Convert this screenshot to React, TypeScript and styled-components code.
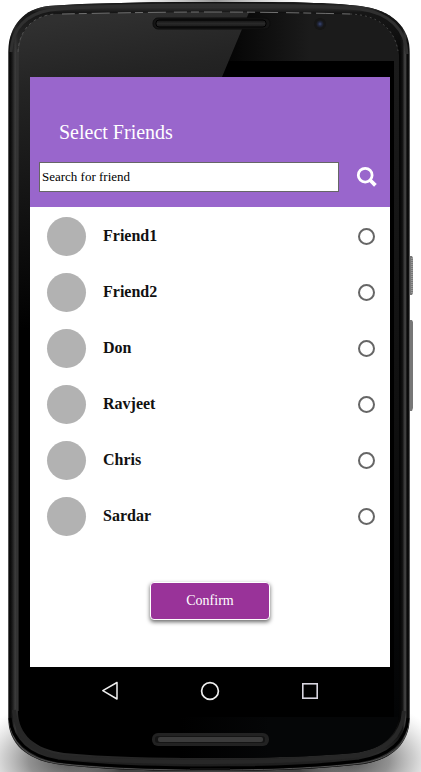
import React, { useState } from "react";
import styled, { createGlobalStyle } from "styled-components";

const GlobalStyle = createGlobalStyle`
  *, *::before, *::after { box-sizing: border-box; }
  body {
    margin: 0;
    background: #fff;
    font-family: "Liberation Serif", "Times New Roman", serif;
  }
`;

const Device = styled.div`
  position: relative;
  min-height: 772px;
  padding: 77px 31px 0 30px;
  overflow: hidden;
`;

const Shell = styled.svg`
  position: absolute;
  inset: 0;
  width: 100%;
  height: 100%;
`;

const Screen = styled.main`
  position: relative;
  display: flex;
  flex-direction: column;
  min-height: 590px;
  background: #fff;
`;

const Header = styled.header`
  padding: 43px 12px 15px 9px;
  background: #9966cc;
`;

const Title = styled.h1`
  margin: 0 0 18px 20px;
  font-size: 20px;
  line-height: 24px;
  font-weight: 400;
  color: #fff;
`;

const SearchForm = styled.form`
  display: flex;
  align-items: center;
  gap: 17px;
`;

const SearchInput = styled.input`
  flex: 1;
  min-width: 0;
  height: 30px;
  padding: 0 2px;
  border: 1px solid #666;
  border-radius: 0;
  background: #fff;
  font: 13px "Liberation Serif", "Times New Roman", serif;
  color: #000;
  &::placeholder { color: #000; opacity: 1; }
`;

const SearchButton = styled.button`
  display: flex;
  padding: 0;
  border: 0;
  background: none;
  cursor: pointer;
`;

const FriendList = styled.ul`
  margin: 0;
  padding: 1px 15px 0 17px;
  list-style: none;
`;

const FriendRow = styled.label`
  display: flex;
  align-items: center;
  height: 56px;
  font-size: 16px;
  font-weight: 700;
  color: #111;
  cursor: pointer;
`;

const Avatar = styled.span`
  width: 39px;
  height: 39px;
  margin-right: 17px;
  border-radius: 50%;
  background: #b2b2b2;
`;

const FriendName = styled.span`
  flex: 1;
`;

const Choice = styled.input`
  appearance: none;
  width: 17px;
  height: 17px;
  margin: 0;
  border: 2px solid #666;
  border-radius: 50%;
  background: #fff;
  cursor: pointer;
  &:checked { background: #993399; box-shadow: inset 0 0 0 2px #fff; }
`;

const ConfirmButton = styled.button`
  align-self: center;
  width: 120px;
  height: 38px;
  margin-top: 38px;
  padding: 0;
  border: 1px solid #fff;
  border-radius: 4px;
  background: #993399;
  box-shadow: 0 2px 4px rgba(0, 0, 0, 0.6);
  font: 14px "Liberation Serif", "Times New Roman", serif;
  color: #fff;
  cursor: pointer;
`;

const NavBar = styled.nav`
  position: relative;
  display: grid;
  grid-template-columns: repeat(3, 100px);
  justify-content: center;
  height: 48px;
`;

const NavButton = styled.button`
  display: flex;
  align-items: center;
  justify-content: center;
  padding: 0;
  border: 0;
  background: none;
  cursor: pointer;
`;

const bodyPath =
  "M8 52 C9 24 25 9 48 6 C90 3 145 2 210 2 C280 2 325 2 360 6 C391 10 410 26 410 54 V718 C409 743 393 759 364 764 C320 769 270 771 210 771 C145 771 95 769 56 764 C26 759 9 744 8 718 Z";
const facePath =
  "M18 52 C19 29 34 15 56 14 C110 13 160 12 210 12 C260 12 310 13 350 14 C378 15 398 30 399 55 V713 C398 735 384 749 354 753 C310 757 260 758 210 758 C155 758 105 757 64 753 C34 749 19 734 18 713 Z";

function PhoneShell() {
  return (
    <Shell viewBox="0 0 421 772" preserveAspectRatio="none" aria-hidden="true">
      <defs>
        <linearGradient id="rim" x1="8" x2="410" y1="0" y2="0" gradientUnits="userSpaceOnUse">
          <stop offset="0" stopColor="#777" />
          <stop offset="0.004" stopColor="#050505" />
          <stop offset="0.01" stopColor="#171717" />
          <stop offset="0.018" stopColor="#3c3c3c" />
          <stop offset="0.025" stopColor="#282828" />
          <stop offset="0.975" stopColor="#050505" />
          <stop offset="0.981" stopColor="#111" />
          <stop offset="0.988" stopColor="#484848" />
          <stop offset="0.993" stopColor="#080808" />
          <stop offset="0.997" stopColor="#111" />
          <stop offset="1" stopColor="#888" />
        </linearGradient>
        <linearGradient id="rimEnds" x1="0" x2="0" y1="0" y2="772" gradientUnits="userSpaceOnUse">
          <stop offset="0" stopColor="#000" />
          <stop offset="0.009" stopColor="#333" />
          <stop offset="0.016" stopColor="#161616" />
          <stop offset="0.07" stopColor="#222" stopOpacity="0" />
          <stop offset="0.93" stopColor="#222" stopOpacity="0" />
          <stop offset="0.975" stopColor="#2b2b2b" />
          <stop offset="1" stopColor="#161616" />
        </linearGradient>
        <linearGradient id="glare" x1="60" y1="20" x2="110" y2="320" gradientUnits="userSpaceOnUse">
          <stop offset="0" stopColor="#303030" />
          <stop offset="0.2" stopColor="#242424" />
          <stop offset="1" stopColor="#000" />
        </linearGradient>
        <linearGradient id="forehead" x1="230" y1="0" x2="310" y2="0" gradientUnits="userSpaceOnUse">
          <stop offset="0" stopColor="#050505" />
          <stop offset="1" stopColor="#1b1b1b" />
        </linearGradient>
        <linearGradient id="side" x1="0" x2="0" y1="60" y2="717" gradientUnits="userSpaceOnUse">
          <stop offset="0" stopColor="#1b1b1b" />
          <stop offset="0.5" stopColor="#111" />
          <stop offset="1" stopColor="#030405" />
        </linearGradient>
        <linearGradient id="chin" x1="180" x2="270" y1="0" y2="0" gradientUnits="userSpaceOnUse">
          <stop offset="0" stopColor="#000" />
          <stop offset="1" stopColor="#050607" />
        </linearGradient>
        <linearGradient id="slot" x1="0" x2="0" y1="0" y2="1">
          <stop offset="0" stopColor="#131313" />
          <stop offset="0.5" stopColor="#292929" />
          <stop offset="1" stopColor="#1a1a1a" />
        </linearGradient>
        <radialGradient id="ground">
          <stop offset="0" stopColor="#555" />
          <stop offset="0.4" stopColor="#777" stopOpacity="0.8" />
          <stop offset="0.65" stopColor="#999" stopOpacity="0.5" />
          <stop offset="1" stopColor="#ccc" stopOpacity="0" />
        </radialGradient>
        <linearGradient id="groundLine">
          <stop offset="0" stopColor="#555" stopOpacity="0" />
          <stop offset="0.2" stopColor="#444" />
          <stop offset="0.8" stopColor="#444" />
          <stop offset="1" stopColor="#555" stopOpacity="0" />
        </linearGradient>
        <radialGradient id="lens">
          <stop offset="0" stopColor="#3b4875" />
          <stop offset="0.5" stopColor="#20263c" />
          <stop offset="1" stopColor="#161616" />
        </radialGradient>
        <linearGradient id="topShadow">
          <stop offset="0" stopColor="#aaa" stopOpacity="0" />
          <stop offset="0.5" stopColor="#999" />
          <stop offset="1" stopColor="#aaa" stopOpacity="0" />
        </linearGradient>
        <clipPath id="faceClip"><path d={facePath} /></clipPath>
      </defs>

      <ellipse cx="66" cy="760" rx="94" ry="60" fill="url(#ground)" />
      <ellipse cx="352" cy="760" rx="94" ry="60" fill="url(#ground)" />
      <path d="M60 766 H360 V772 H60Z" fill="url(#groundLine)" />
      <path d="M130 0 H300 V4 H130Z" fill="url(#topShadow)" />
      <path d="M410 256 h2 l1 2 v35 l-1 2 h-2z M410 320 h2 l1 2 v86 l-1 3 h-2z" fill="#777" />
      <path d="M412 258 V294" stroke="#bbb" strokeDasharray="1 1" />

      <path d={bodyPath} fill="url(#rim)" />
      <path d={bodyPath} fill="url(#rimEnds)" />
      <path d="M11 52 C12 28 27 14 50 10 C90 6 145 5 210 5 C280 5 325 6 360 9 C389 13 406 29 407 54" fill="none" stroke="#303030" strokeWidth="3" />
      <path d="M9 718 C10 742 26 758 56 763 C95 768 145 770 210 770 C270 770 320 768 362 763 C393 758 408 743 409 718" fill="none" stroke="#555" />
      <path d="M10 718 C12 741 29 756 58 761 C100 766 150 768 210 768 C270 768 318 766 359 761 C389 756 406 741 408 718" fill="none" stroke="#000" strokeWidth="3" />
      <path d="M14 710 C16 737 32 752 61 757 C105 761 155 762 210 762 C265 762 314 760 354 756 C385 752 402 738 404 711" fill="none" stroke="#272727" strokeWidth="4" />

      <g clipPath="url(#faceClip)">
        <path d="M18 10 H400 V760 H18Z" fill="#000" />
        <path d="M250 10 H400 V61 H220Z" fill="url(#forehead)" />
        <path d="M18 10 H250 L222 77 L120 330 H18Z" fill="url(#glare)" />
        <path d="M394 60 H400 V717 H394Z" fill="url(#side)" />
        <path d="M180 717 H400 V760 H180Z" fill="url(#chin)" />
      </g>
      <path d="M18 711 V52 C19 44 20 39 23 34" fill="none" stroke="#3d3d3d" />
      <path d="M62 14 C110 13 160 12 210 12 C260 12 310 13 350 14" fill="none" stroke="#707070" strokeDasharray="13 4 8 5 18 8" />
      <path d="M350 14 C378 15 394 28 398 51" fill="none" stroke="#444" strokeDasharray="2 3" />
      <path d="M18 52 C19 29 34 15 56 14" fill="none" stroke="#505050" strokeDasharray="3 3" />

      <rect x="153" y="18" width="117" height="11" rx="5" fill="#151515" stroke="#0c0c0c" />
      <rect x="156" y="20" width="110" height="7" rx="3" fill="url(#slot)" stroke="#000" />
      <circle cx="320" cy="24" r="6" fill="#161616" />
      <circle cx="320" cy="24" r="4" fill="url(#lens)" />

      <rect x="152" y="733" width="117" height="13" rx="6" fill="#222" />
      <rect x="155" y="736" width="110" height="7" rx="3" fill="#151515" />
      <rect x="158" y="737" width="105" height="5" rx="2" fill="#3b3b3b" />
      <path d="M190 768 H230 V770 H190Z" fill="#101010" />
    </Shell>
  );
}

const friends = ["Friend1", "Friend2", "Don", "Ravjeet", "Chris", "Sardar"];

export default function App() {
  const [selected, setSelected] = useState("");

  return (
    <>
      <GlobalStyle />
      <Device>
        <PhoneShell />
        <Screen>
          <Header>
            <Title>Select Friends</Title>
            <SearchForm onSubmit={(event) => event.preventDefault()}>
              <SearchInput type="text" aria-label="Search for friend" placeholder="Search for friend" />
              <SearchButton type="submit" aria-label="Search">
                <svg width="22" height="22" viewBox="0 0 22 22" fill="none" stroke="#fff">
                  <circle cx="9.2" cy="9.2" r="6.9" strokeWidth="2.8" />
                  <path d="M14 14 L19.4 19.4" strokeWidth="3.8" />
                </svg>
              </SearchButton>
            </SearchForm>
          </Header>
          <FriendList>
            {friends.map((name) => (
              <li key={name}>
                <FriendRow>
                  <Avatar />
                  <FriendName>{name}</FriendName>
                  <Choice
                    type="radio"
                    name="friend"
                    value={name}
                    checked={selected === name}
                    onChange={() => setSelected(name)}
                  />
                </FriendRow>
              </li>
            ))}
          </FriendList>
          <ConfirmButton type="button">Confirm</ConfirmButton>
        </Screen>
        <NavBar>
          <NavButton type="button" aria-label="Back">
            <svg width="20" height="20" viewBox="0 0 20 20" fill="none" stroke="#eee" strokeWidth="1.5">
              <path d="M17 1.5 V18 L2.8 9.7 Z" strokeLinejoin="round" />
            </svg>
          </NavButton>
          <NavButton type="button" aria-label="Home">
            <svg width="20" height="20" viewBox="0 0 20 20" fill="none" stroke="#eee" strokeWidth="1.7">
              <circle cx="10" cy="10" r="8.4" />
            </svg>
          </NavButton>
          <NavButton type="button" aria-label="Recent apps">
            <svg width="20" height="20" viewBox="0 0 20 20" fill="none" stroke="#d8d5e0" strokeWidth="1.6">
              <rect x="2.8" y="2.8" width="14.4" height="14.4" />
            </svg>
          </NavButton>
        </NavBar>
      </Device>
    </>
  );
}
